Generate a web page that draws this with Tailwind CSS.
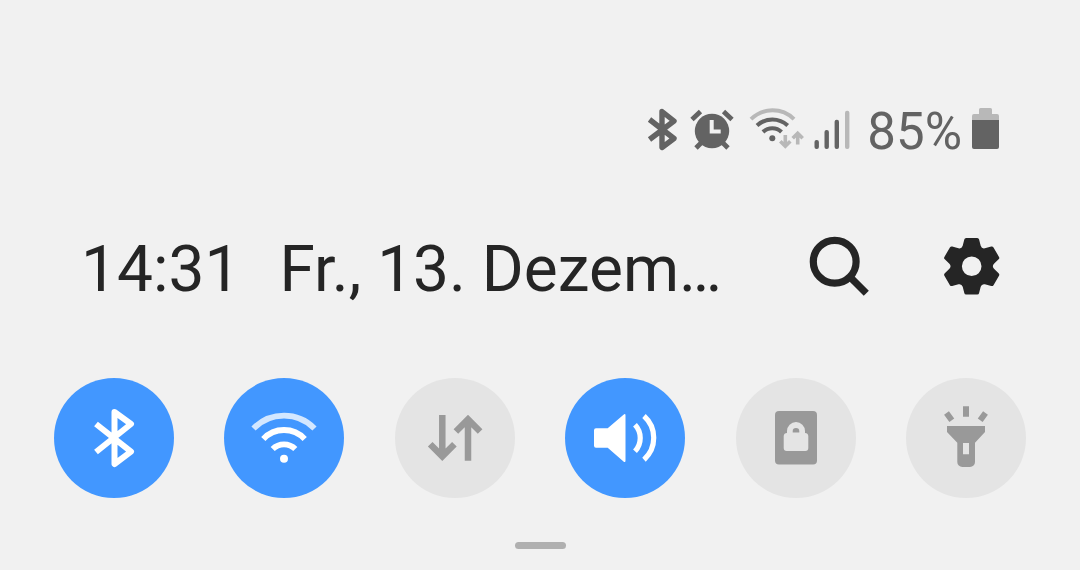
<!DOCTYPE html>
<html lang="de">
<head>
    <meta charset="UTF-8">
    <meta name="viewport" content="width=device-width, initial-scale=1.0">
    <title>Schnelleinstellungen</title>
    <script src="https://cdn.jsdelivr.net/npm/@tailwindcss/browser@4"></script>
</head>
<body class="bg-[#f1f1f1] min-h-screen font-[Roboto,sans-serif]">
    <!-- Status bar -->
    <div class="flex justify-end items-center gap-2 pt-[107px] pr-20 text-[#636363]">
        <svg class="w-[34px] h-[50px]" viewBox="0 0 34 50" fill="none" stroke="currentColor" stroke-width="5.4" stroke-linejoin="round" aria-label="Bluetooth">
            <path d="M3.5 12.5 28 31.5 16 40.5V4.5L28 14 3.5 32.5"/>
        </svg>
        <svg class="w-12 h-[50px]" viewBox="0 0 48 50" fill="none" stroke="currentColor" stroke-width="4.8" aria-label="Wecker">
            <circle cx="24" cy="24" r="17.2" fill="currentColor" stroke="none"/>
            <path d="M4 12.5 12.5 4.5M35.5 4.5 44 12.5M8 41l6-6M34 35l6 6"/>
            <path d="M23.7 13v11.4h9" stroke="#f1f1f1" stroke-width="4"/>
        </svg>
        <svg class="w-[60px] h-[50px]" viewBox="0 0 60 50" fill="none" stroke="currentColor" stroke-width="4" aria-label="WLAN">
            <path d="M7 12.2A30.6 30.6 0 0 1 50 12.2" stroke="#b8b8b8"/>
            <path d="M13 18.5A22.5 22.5 0 0 1 43.7 18.5M19 25A13 13 0 0 1 37.5 25"/>
            <circle cx="28.3" cy="31.3" r="3" fill="currentColor" stroke="none"/>
            <path d="M41.3 28v12M36.3 34.3l5 5 5-5M53.7 37.5V26M48.7 31.2l5-5 5 5" stroke="#b8b8b8" stroke-width="3.6"/>
        </svg>
        <svg class="w-[47px] h-[50px]" viewBox="0 0 47 50" fill="currentColor" aria-label="Signal">
            <rect x="2.5" y="33" width="4.4" height="9" rx="2"/>
            <rect x="12.5" y="23" width="4.4" height="19" rx="2"/>
            <rect x="22.6" y="12.7" width="4.4" height="29.3" rx="2"/>
            <rect x="33" y="3.7" width="4.4" height="38.3" rx="2" fill="#b8b8b8"/>
        </svg>
        <span class="text-[51px] leading-[50px]">85%</span>
        <svg class="w-[30px] h-[50px]" viewBox="2 0 30 50" aria-label="Akku">
            <path d="M4 15V9a2 2 0 0 1 2-2h5V2.5a1.5 1.5 0 0 1 1.5-1.5h10a1.5 1.5 0 0 1 1.5 1.5V7h5a2 2 0 0 1 2 2v6z" fill="#b8b8b8"/>
            <path d="M4 13h27v27a2 2 0 0 1-2 2H6a2 2 0 0 1-2-2z" fill="currentColor"/>
        </svg>
    </div>

    <!-- Time, date, actions -->
    <div class="flex items-center mt-[81px] pl-[81px] pr-[76px] text-[#252525]">
        <div class="flex gap-[39px] text-[64px] leading-[64px] whitespace-nowrap">
            <span>14:31</span>
            <span>Fr., 13. Dezem…</span>
        </div>
        <div class="flex gap-[68px] ml-auto">
            <button type="button" aria-label="Suche">
                <svg class="size-16 overflow-visible" viewBox="0 1 64 64" fill="none" stroke="currentColor" stroke-width="7.2">
                    <circle cx="26.7" cy="24.7" r="21.4"/>
                    <path d="M41.5 39.5 58.3 56.3"/>
                </svg>
            </button>
            <button type="button" aria-label="Einstellungen">
                <svg class="size-16" viewBox="-31.7 -28.3 64 64" fill="currentColor" fill-rule="evenodd">
                    <path d="M5.5-28.3Q7.1-28.3 7.4-26.8L9-20.5Q10-17.3 13.2-18L19.5-19.7Q21-20 21.8-18.9L27.3-9.4Q28.1-8 26.9-7L22.3-2.5Q20 0 22.3 2.5L26.9 7Q28.1 8 27.3 9.4L21.8 18.9Q21 20 19.5 19.7L13.2 18Q10 17.3 9 20.5L7.4 26.8Q7.1 28.3 5.5 28.3H-5.5Q-7.1 28.3-7.4 26.8L-9 20.5Q-10 17.3-13.2 18L-19.5 19.7Q-21 20-21.8 18.9L-27.3 9.4Q-28.1 8-26.9 7L-22.3 2.5Q-20 0-22.3-2.5L-26.9-7Q-28.1-8-27.3-9.4L-21.8-18.9Q-21-20-19.5-19.7L-13.2-18Q-10-17.3-9-20.5L-7.4-26.8Q-7.1-28.3-5.5-28.3ZM9.8 0A9.8 9.8 0 1 0-9.8 0A9.8 9.8 0 1 0 9.8 0Z"/>
                </svg>
            </button>
        </div>
    </div>

    <!-- Quick toggles -->
    <div class="flex justify-between mt-[76px] px-[54px]">
        <button type="button" aria-label="Bluetooth" aria-pressed="true" class="size-[120px] rounded-full bg-[#4297ff] text-white">
            <svg class="size-full" viewBox="0 0 120 120" fill="none" stroke="currentColor" stroke-width="6" stroke-linejoin="round">
                <path d="M42 46 77 73.7 60.5 86V34L77 46 42 74"/>
            </svg>
        </button>
        <button type="button" aria-label="WLAN" aria-pressed="true" class="size-[120px] rounded-full bg-[#4297ff] text-white">
            <svg class="size-full" viewBox="0 0 120 120" fill="none" stroke="currentColor" stroke-width="5.8">
                <path d="M29.5 50.5A42.7 42.7 0 0 1 90.5 50.5" stroke="#d3e7ff"/>
                <path d="M39.3 61A28.3 28.3 0 0 1 80.7 61M48.7 71A16 16 0 0 1 71.3 71"/>
                <circle cx="60" cy="80.7" r="4" fill="currentColor" stroke="none"/>
            </svg>
        </button>
        <button type="button" aria-label="Mobile Daten" aria-pressed="false" class="size-[120px] rounded-full bg-[#e4e4e4] text-[#999]">
            <svg class="size-full" viewBox="0 0 120 120" fill="none" stroke="currentColor" stroke-width="6.5">
                <path d="M47.3 37v42M35.2 66.2l12.1 12.1 12.1-12.1M73 82.7V41M60.9 53.5 73 41.4l12.1 12.1"/>
            </svg>
        </button>
        <button type="button" aria-label="Ton" aria-pressed="true" class="size-[120px] rounded-full bg-[#4297ff] text-white">
            <svg class="size-full" viewBox="0 0 120 120" fill="none" stroke="currentColor" stroke-width="5.2">
                <path d="M31 50.3H42.7L58.5 36.7Q60.5 35.2 60.5 37.5V82.5Q60.5 85 58.5 83.5L42.7 69.7H31Q29 69.7 29 67.7V52.3Q29 50.3 31 50.3Z" fill="currentColor" stroke="none"/>
                <path d="M70 46.7A19.5 19.5 0 0 1 70 73.3M79 38A29.4 29.4 0 0 1 79 81.7"/>
            </svg>
        </button>
        <button type="button" aria-label="Ausrichtung gesperrt" aria-pressed="false" class="size-[120px] rounded-full bg-[#e4e4e4] text-[#999]">
            <svg class="size-full" viewBox="0 0 120 120" fill="currentColor">
                <rect x="39" y="33" width="42" height="53.4" rx="4"/>
                <path d="M51 55v-2a9 9 0 0 1 18 0v2a3.3 3.3 0 0 1 3.3 3v12a3 3 0 0 1-3 3H50.7a3 3 0 0 1-3-3V58a3.3 3.3 0 0 1 3.3-3z" fill="#e4e4e4"/>
                <path d="M56.7 54.5v-1.2a3.3 3.3 0 0 1 6.6 0v1.2z"/>
            </svg>
        </button>
        <button type="button" aria-label="Taschenlampe" aria-pressed="false" class="size-[120px] rounded-full bg-[#e4e4e4] text-[#999]">
            <svg class="size-full" viewBox="0 0 120 120" fill="currentColor">
                <path d="M41 48H79V54L69 64.7V84a5 5 0 0 1-5 5H56.3a5 5 0 0 1-5-5V64.7L41 54ZM57 65V76.3H63V65Z" fill-rule="evenodd"/>
                <path d="M60 28.3V38.7M40.5 35 45.8 42.2M79.5 35 74.2 42.2" stroke="currentColor" stroke-width="6"/>
            </svg>
        </button>
    </div>

    <!-- Drag handle -->
    <div class="w-[51px] h-[7px] mt-11 mx-auto rounded-full bg-[#b0b0b0]"></div>
</body>
</html>
